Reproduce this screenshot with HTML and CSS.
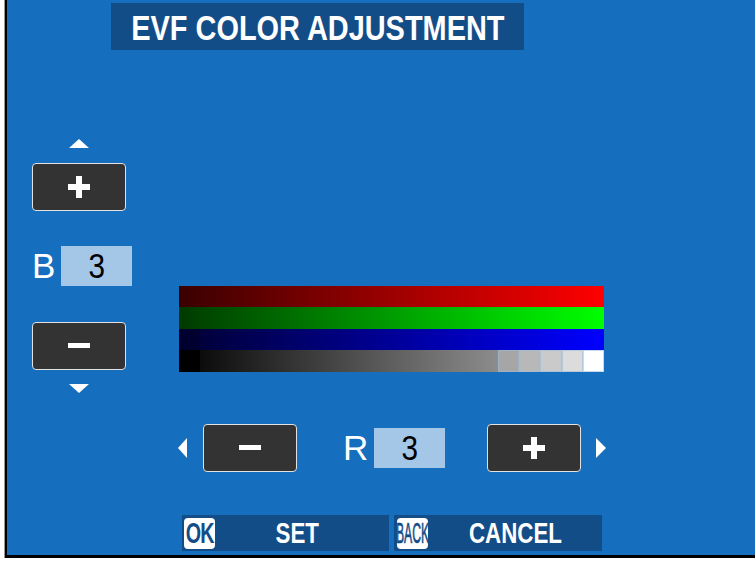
FILE: index.html
```html
<!DOCTYPE html>
<html>
<head>
<meta charset="utf-8">
<link rel="stylesheet" href="styles.css">
</head>
<body>
<div class="screen">
  <div class="title"><span class="title-text">EVF COLOR ADJUSTMENT</span></div>

  <div class="middle">
    <div class="leftcol">
      <div class="tri tri-up"></div>
      <div class="btn btn-plus-top">
        <svg width="22" height="22" viewBox="0 0 22 22"><path d="M8 0h6v8h8v6h-8v8h-6v-8h-8v-6h8z" fill="#fff"/></svg>
      </div>
      <div class="valrow">
        <span class="lbl">B</span>
        <span class="valbox"><span class="digit">3</span></span>
      </div>
      <div class="btn btn-minus-left">
        <svg width="22" height="6" viewBox="0 0 22 6"><rect x="0" y="0" width="22" height="5" fill="#fff"/></svg>
      </div>
      <div class="tri tri-down"></div>
    </div>

    <div class="rightcol">
      <div class="bars">
        <div class="bar bar-red"></div>
        <div class="bar bar-green"></div>
        <div class="bar bar-blue"><span class="cell cell-blue0"></span><span class="grad grad-blue"></span></div>
        <div class="bar bar-gray">
          <span class="cell cell-black"></span>
          <span class="grad grad-gray"></span>
          <span class="step step1"></span>
          <span class="step step2"></span>
          <span class="step step3"></span>
          <span class="step step4"></span>
          <span class="step step5"></span>
        </div>
      </div>
    </div>
  </div>

  <div class="controls">
    <div class="tri tri-left"></div>
    <div class="btn btn-minus-bottom">
      <svg width="22" height="6" viewBox="0 0 22 6"><rect x="0" y="0" width="22" height="5" fill="#fff"/></svg>
    </div>
    <span class="lbl lbl-r">R</span>
    <span class="valbox"><span class="digit">3</span></span>
    <div class="btn btn-plus-right">
      <svg width="22" height="22" viewBox="0 0 22 22"><path d="M8 0h6v8h8v6h-8v8h-6v-8h-8v-6h8z" fill="#fff"/></svg>
    </div>
    <div class="tri tri-right"></div>
  </div>

  <div class="footer">
    <div class="seg seg-set">
      <span class="key key-ok"><span class="key-text ok-text">OK</span></span>
      <span class="seg-label seg-label-set"><span class="seg-text set-text">SET</span></span>
    </div>
    <div class="seg seg-cancel">
      <span class="key key-back"><span class="key-text back-text">BACK</span></span>
      <span class="seg-label"><span class="seg-text cancel-text">CANCEL</span></span>
    </div>
  </div>
</div>
</body>
</html>
```

FILE: styles.css
```css
* {
  box-sizing: border-box;
}

html, body {
  margin: 0;
  padding: 0;
  background: #ffffff;
}

body {
  font-family: "Liberation Sans", Arial, sans-serif;
}

.screen {
  width: 750px;
  height: 558px;
  margin-left: 5px;
  padding-top: 3px;
  border-left: 2px solid #000;
  border-bottom: 3px solid #000;
  box-shadow: -1px 0 0 #9a9a9a;
  background: #166ebe;
  display: flex;
  flex-direction: column;
  align-items: flex-start;
  overflow: hidden;
}

.title {
  margin-left: 104px;
  width: 413px;
  height: 47px;
  padding-top: 2px;
  background: #134d87;
  color: #fff;
  font-weight: bold;
  font-size: 35px;
  line-height: 45px;
  display: flex;
  justify-content: center;
  white-space: nowrap;
}

.title-text {
  display: block;
  flex-shrink: 0;
  transform: scaleX(0.826);
  transform-origin: center;
}

/* middle area */
.middle {
  display: flex;
  margin-top: 89px;
  margin-left: 25px;
}

.leftcol {
  width: 100px;
  display: flex;
  flex-direction: column;
  align-items: flex-start;
}

.tri {
  width: 0;
  height: 0;
}

.tri-up {
  margin-left: 37px;
  border-left: 10px solid transparent;
  border-right: 10px solid transparent;
  border-bottom: 9px solid #fff;
}

.tri-down {
  margin-top: 14px;
  margin-left: 37px;
  border-left: 10px solid transparent;
  border-right: 10px solid transparent;
  border-top: 9px solid #fff;
}

.btn {
  width: 94px;
  height: 48px;
  background: #333333;
  border: 1px solid #e2e2e2;
  border-radius: 4px;
  display: flex;
  align-items: center;
  justify-content: center;
}

.btn svg {
  display: block;
}

.btn-plus-top {
  margin-top: 15px;
}

.btn-minus-left {
  margin-top: 36px;
}

.valrow {
  margin-top: 35px;
  height: 40px;
  display: flex;
  align-items: center;
}

.lbl {
  color: #fff;
  font-size: 35px;
  line-height: 40px;
  width: 29px;
}

.valbox {
  width: 71px;
  height: 40px;
  background: #a4c6e7;
  color: #000;
  font-size: 35px;
  line-height: 40px;
  text-align: center;
}

.digit {
  display: inline-block;
  transform: scaleX(0.85);
}

/* bars */
.rightcol {
  margin-left: 47px;
}

.bars {
  margin-top: 147px;
  width: 425px;
  height: 86px;
  display: grid;
  grid-template-rows: 21px 22px 21px 22px;
}

.bar {
  display: flex;
}

.bar-red {
  background: linear-gradient(to right, #3a0000, #ff0000);
}

.bar-green {
  background: linear-gradient(to right, #003a00, #00ff00);
}

.cell {
  width: 21px;
  height: 100%;
}

.cell-blue0 {
  background: #000030;
}

.grad {
  height: 100%;
}

.grad-blue {
  flex: 1;
  background: linear-gradient(to right, #00003c, #0000ff);
}

.cell-black {
  background: #000;
}

.grad-gray {
  width: 298px;
  background: linear-gradient(to right, #0c0c0c, #8c8c8c);
}

.step {
  flex: 1;
  height: 100%;
  border: 1px solid rgba(150, 185, 225, 0.55);
}

.step1 { background: #a6a6a6; }
.step2 { background: #b8b8b8; }
.step3 { background: #cacaca; }
.step4 { background: #dcdcdc; }
.step5 { background: #ffffff; }

/* bottom controls */
.controls {
  margin-top: 31px;
  margin-left: 171px;
  height: 48px;
  display: flex;
  align-items: center;
}

.tri-left {
  border-top: 10px solid transparent;
  border-bottom: 10px solid transparent;
  border-right: 9px solid #fff;
}

.btn-minus-bottom {
  margin-left: 16px;
}

.lbl-r {
  margin-left: 46px;
  width: 31px;
}

.btn-plus-right {
  margin-left: 42px;
}

.tri-right {
  margin-left: 15px;
  border-top: 10px solid transparent;
  border-bottom: 10px solid transparent;
  border-left: 10px solid #fff;
}

/* footer */
.footer {
  margin-top: 43px;
  margin-left: 175px;
  display: flex;
  gap: 5px;
}

.seg {
  height: 36px;
  background: #134d87;
  display: flex;
  align-items: center;
}

.seg-set {
  width: 207px;
  padding-left: 2px;
}

.seg-cancel {
  width: 208px;
  padding-left: 3px;
}

.key {
  width: 31px;
  height: 31px;
  background: #fff;
  border-radius: 4px;
  display: flex;
  align-items: center;
  justify-content: center;
  overflow: hidden;
  color: #134d87;
  font-weight: bold;
  white-space: nowrap;
}

.key-text {
  display: block;
  flex-shrink: 0;
}

.ok-text {
  font-size: 29px;
  line-height: 31px;
  transform: scaleX(0.68);
  letter-spacing: -1px;
}

.back-text {
  font-size: 29px;
  line-height: 31px;
  transform: scaleX(0.42);
  font-weight: normal;
  -webkit-text-stroke: 0.7px #134d87;
}

.seg-label {
  flex: 1;
  text-align: center;
  color: #fff;
  font-weight: bold;
  font-size: 29px;
  line-height: 36px;
  white-space: nowrap;
}

.seg-label-set {
  padding-right: 9px;
}

.seg-text {
  display: inline-block;
  transform: scaleX(0.77);
}
```
